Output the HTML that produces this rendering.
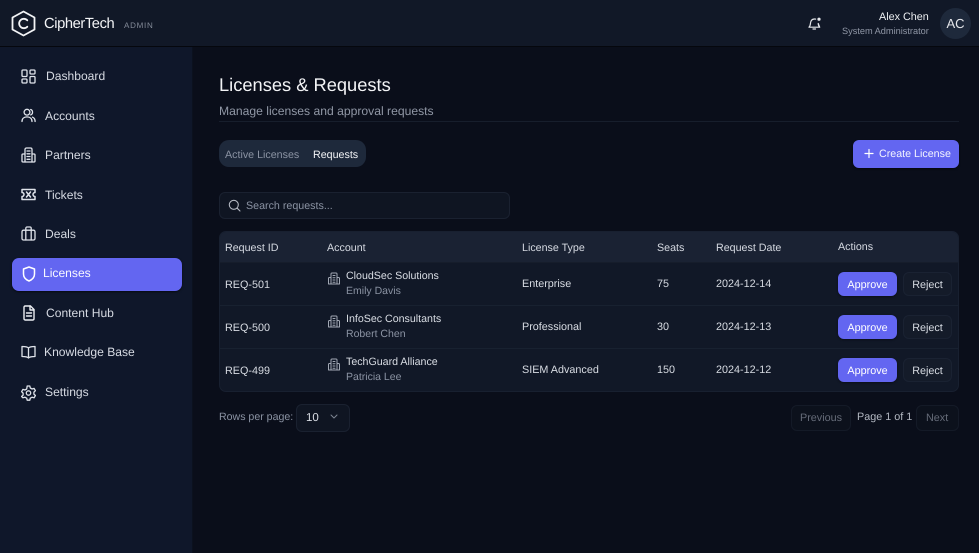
<!DOCTYPE html>
<html><head><meta charset="utf-8"><style>
*{box-sizing:border-box;margin:0;padding:0}
html{background:#0a0e1a}
html,body{width:979px;height:553px;overflow:hidden;font-family:"Liberation Sans",sans-serif;color:#e5e7eb;text-rendering:geometricPrecision}
body{background:#0a0e1a;filter:blur(.3px)}
.t{position:absolute;white-space:nowrap;line-height:14px;font-size:12px}
.a{position:absolute}
svg{position:absolute;fill:none;stroke:currentColor;stroke-width:1.6;stroke-linecap:round;stroke-linejoin:round}
.n{font-size:12.1px;color:#d6dae2;line-height:16px}
.btn{position:absolute;border-radius:6px;text-align:center;font-size:10.800px}
.ap{background:#6366f1;color:#fff;width:59px;height:24px;left:838px;line-height:26px;box-shadow:0 1px 2px #0006}
.rj{background:#141b29;border:1px solid #1a2232;color:#d8dce3;width:49px;height:24px;left:903px;line-height:24px}
.sub{color:#8b93a3;font-size:10.5px}
.cell{font-size:10.800px;color:#d8dce3}
.nm{font-size:10.650px;color:#d8dce3}
.th{font-size:10.700px;color:#d5d9e1}
.tab{font-size:10.700px}
</style></head><body>
<div class="a" style="left:0;top:0;width:979px;height:47px;background:#111827;border-bottom:1px solid #05070d"></div>
<div class="a" style="left:0;top:47px;width:193px;height:506px;background:#0f172a;border-right:1px solid #0b111e"></div>

<svg style="left:11px;top:10px;color:#f3f4f6;stroke-width:1.8" width="25" height="27" viewBox="0 0 25 27"><path d="M12.5 1.500 23.500 7.500V19.500L12.500 25.500 1.500 19.500V7.500Z"/><path d="M16.300 10.300a4.700 4.700 0 1 0 0 6.400" /></svg>
<div class="t" style="left:44px;top:15px;font-size:14.700px;line-height:18px;color:#f3f4f6;letter-spacing:-.4px">CipherTech</div>
<div class="t" style="left:124px;top:20px;font-size:8px;line-height:11px;color:#858c9a;letter-spacing:.75px">ADMIN</div>

<svg style="left:21px;top:69px;color:#dfe3ea;stroke-width:1.3" width="15" height="15" viewBox="0 0 15 15"><rect x="1" y="1" width="5" height="6.5" rx="1"/><rect x="9" y="1" width="5" height="4" rx="1"/><rect x="1" y="10" width="5" height="4" rx="1"/><rect x="9" y="7.5" width="5" height="6.5" rx="1"/></svg>
<div class="t n" style="left:46px;top:68px">Dashboard</div>
<svg style="left:21px;top:108px;color:#dfe3ea;stroke-width:1.3" width="15" height="15" viewBox="0 0 15 15"><circle cx="6" cy="4.2" r="2.9"/><path d="M1 13.5c0-3 2-4.6 5-4.600s5 1.600 5 4.600"/><path d="M9.700 1.500a2.900 2.900 0 0 1 0 5.400M11.500 9.200c1.600.6 2.600 2 2.600 4.300"/></svg>
<div class="t n" style="left:45px;top:108px">Accounts</div>
<svg style="left:21px;top:147px;color:#dfe3ea;stroke-width:1.3" width="15" height="16" viewBox="0 0 15 16"><path d="M4 15V2.500c0-.8.600-1.500 1.500-1.500h4c.9 0 1.500.7 1.500 1.500V15"/><path d="M4 7H2C1.300 7 1 7.500 1 8v6c0 .6.400 1 1 1h11c.6 0 1-.4 1-1V8c0-.5-.3-1-1-1h-2"/><path d="M6 4h3M6 6.800h3M6 9.500h3M6 12.300h3"/></svg>
<div class="t n" style="left:45px;top:147px">Partners</div>
<svg style="left:21px;top:188px;color:#dfe3ea;stroke-width:1.500" width="15" height="13" viewBox="0 0 15 13"><path d="M1 1.500h13v3a2 2 0 0 0 0 4v3H1v-3a2 2 0 0 0 0-4z"/><path d="M5.500 4l4 5M9.500 4l-4 5"/></svg>
<div class="t n" style="left:45px;top:187px">Tickets</div>
<svg style="left:21px;top:226px;color:#dfe3ea;stroke-width:1.3" width="15" height="15" viewBox="0 0 15 15"><rect x="1" y="4.200" width="13" height="9.800" rx="1.500"/><path d="M4.800 14V2.300c0-.7.500-1.300 1.200-1.300h3c.7 0 1.200.6 1.200 1.300V14"/></svg>
<div class="t n" style="left:45px;top:226px">Deals</div>

<div class="a" style="left:12px;top:258px;width:170px;height:33px;background:#6366f1;border-radius:7px;box-shadow:0 1px 2px #0009"></div>
<svg style="left:22px;top:266px;color:#fff;stroke-width:1.500" width="14" height="16" viewBox="0 0 14 16"><path d="M7 1 12.500 3V8c0 3.300-2.300 5.700-5.500 7-3.200-1.300-5.500-3.700-5.500-7V3z"/></svg>
<div class="t n" style="left:43px;top:265px;color:#f8f8ff">Licenses</div>

<svg style="left:23px;top:305px;color:#eceef2;stroke-width:1.400" width="12" height="16" viewBox="0 0 12 16"><path d="M1 2.200C1 1.500 1.500 1 2.200 1H7.500L11 4.500V13.800c0 .7-.5 1.200-1.200 1.200H2.200C1.500 15 1 14.500 1 13.800z"/><path d="M7 1v4h4M3.500 8h5M3.500 11h5"/></svg>
<div class="t n" style="left:46px;top:305px">Content Hub</div>
<svg style="left:21px;top:345px;color:#dfe3ea;stroke-width:1.300" width="15" height="14" viewBox="0 0 15 14"><path d="M7.500 3C6.500 1.800 5 1.500 1 1.500V11.500C5 11.500 6.500 11.800 7.500 13c1-1.200 2.500-1.500 6.500-1.500V1.500C10 1.500 8.500 1.800 7.500 3zM7.500 3v10"/></svg>
<div class="t n" style="left:44px;top:344px">Knowledge Base</div>
<svg style="left:21px;top:385px;color:#dfe3ea;stroke-width:1.300" width="15" height="16" viewBox="0 0 15 16"><circle cx="7.500" cy="8" r="2.200"/><path d="M6.200 1h2.600l.5 2 1.800 1 2-.6 1.300 2.300-1.500 1.400v2l1.500 1.400-1.300 2.300-2-.6-1.800 1-.5 2H6.200l-.5-2-1.800-1-2 .6L.6 11.500l1.500-1.400v-2L.6 6.700 1.900 4.400l2 .6 1.800-1z"/></svg>
<div class="t n" style="left:45px;top:384px">Settings</div>

<svg style="left:808px;top:17px;color:#e5e7eb;stroke-width:1.200" width="14" height="13" viewBox="0 0 14 13"><path d="M1 10.200c1-1 1.300-1.700 1.500-4 .2-2.500 1.500-4 3.700-4.200 .5 0 1 0 1.400.1M10.200 6.500c.1 1.800.5 2.800 1.500 3.700zM1 10.200h10.700M5 12h2.500"/><circle cx="11" cy="2.200" r="1.600" fill="#e5e7eb" stroke="none"/></svg>
<div class="t" style="left:879px;top:10px;font-size:10.800px;color:#eef0f3">Alex Chen</div>
<div class="t" style="left:842px;top:24px;font-size:9.200px;color:#8f96a5">System Administrator</div>
<div class="a" style="left:940px;top:8px;width:31px;height:31px;border-radius:50%;background:#1e293b;color:#e5e7eb;font-size:13px;line-height:32px;text-align:center">AC</div>

<div class="t" style="left:219px;top:73px;font-size:18.300px;line-height:23px;color:#f3f4f6">Licenses &amp; Requests</div>
<div class="t" style="left:219px;top:103px;font-size:12.150px;line-height:16px;color:#9097a5">Manage licenses and approval requests</div>
<div class="a" style="left:219px;top:121px;width:740px;height:1px;background:#171e2c"></div>

<div class="a" style="left:219px;top:140px;width:147px;height:27px;border-radius:10px;background:#1e293b"></div>
<div class="t tab" style="left:225px;top:148px;color:#8b93a3">Active Licenses</div>
<div class="t tab" style="left:313px;top:148px;color:#f1f2f5">Requests</div>

<div class="a" style="left:853px;top:140px;width:106px;height:28px;border-radius:6px;background:#6366f1;box-shadow:0 1px 2px #0008"></div>
<svg style="left:863px;top:147px;color:#fff;stroke-width:1.200" width="12" height="12" viewBox="0 0 12 12"><path d="M2 6.500h8M6 2.500v8"/></svg>
<div class="t tab" style="left:879px;top:147px;color:#f3f4ff">Create License</div>

<div class="a" style="left:219px;top:192px;width:291px;height:27px;border-radius:6px;background:#0f1522;border:1px solid #1a2130"></div>
<svg style="left:228px;top:199px;color:#b4b9c3;stroke-width:1.100" width="13" height="13" viewBox="0 0 13 13"><circle cx="5.800" cy="5.800" r="4.500"/><path d="M9.200 9.200 12 12"/></svg>
<div class="t tab" style="left:246px;top:199px;color:#8b93a3">Search requests...</div>

<div class="a" style="left:219px;top:231px;width:740px;height:161px;border-radius:7px;background:#111827;border:1px solid #182030;overflow:hidden">
<div class="a" style="left:0;top:0;width:740px;height:31px;background:#1a2233;border-bottom:1px solid #161d2b"></div>
<div class="a" style="left:0;top:73px;width:740px;height:1px;background:#182130"></div>
<div class="a" style="left:0;top:116px;width:740px;height:1px;background:#182130"></div>
</div>

<div class="t th" style="left:225px;top:241px">Request ID</div>
<div class="t th" style="left:327px;top:241px">Account</div>
<div class="t th" style="left:522px;top:241px">License Type</div>
<div class="t th" style="left:657px;top:241px">Seats</div>
<div class="t th" style="left:716px;top:241px">Request Date</div>
<div class="t th" style="left:838px;top:240px">Actions</div>

<svg style="left:328px;top:272px;color:#a2a8b4;stroke-width:1" width="12" height="13" viewBox="0 0 12 13"><path d="M3 12V2c0-.6.400-1 1-1h4c.6 0 1 .4 1 1v10"/><path d="M3 5.500H1.500C1 5.500.5 6 .5 6.500V12h11V6.500c0-.5-.5-1-1-1H9"/><path d="M5 3.500h2M5 5.700h2M5 8h2M5 10.200h2"/></svg>
<svg style="left:328px;top:315px;color:#a2a8b4;stroke-width:1" width="12" height="13" viewBox="0 0 12 13"><path d="M3 12V2c0-.6.400-1 1-1h4c.6 0 1 .4 1 1v10"/><path d="M3 5.500H1.500C1 5.500.5 6 .5 6.500V12h11V6.500c0-.5-.5-1-1-1H9"/><path d="M5 3.500h2M5 5.700h2M5 8h2M5 10.200h2"/></svg>
<svg style="left:328px;top:358px;color:#a2a8b4;stroke-width:1" width="12" height="13" viewBox="0 0 12 13"><path d="M3 12V2c0-.6.400-1 1-1h4c.6 0 1 .4 1 1v10"/><path d="M3 5.500H1.500C1 5.500.5 6 .5 6.500V12h11V6.500c0-.5-.5-1-1-1H9"/><path d="M5 3.500h2M5 5.700h2M5 8h2M5 10.200h2"/></svg>

<div class="t cell" style="left:225px;top:278px">REQ-501</div>
<div class="t nm" style="left:346px;top:269px">CloudSec Solutions</div>
<div class="t sub" style="left:346px;top:284px">Emily Davis</div>
<div class="t cell" style="left:522px;top:277px">Enterprise</div>
<div class="t cell" style="left:657px;top:277px">75</div>
<div class="t cell" style="left:716px;top:277px">2024-12-14</div>
<div class="btn ap" style="top:272px">Approve</div><div class="btn rj" style="top:272px">Reject</div>

<div class="t cell" style="left:225px;top:321px">REQ-500</div>
<div class="t nm" style="left:346px;top:312px">InfoSec Consultants</div>
<div class="t sub" style="left:346px;top:327px">Robert Chen</div>
<div class="t cell" style="left:522px;top:320px">Professional</div>
<div class="t cell" style="left:657px;top:320px">30</div>
<div class="t cell" style="left:716px;top:320px">2024-12-13</div>
<div class="btn ap" style="top:315px">Approve</div><div class="btn rj" style="top:315px">Reject</div>

<div class="t cell" style="left:225px;top:364px">REQ-499</div>
<div class="t nm" style="left:346px;top:355px">TechGuard Alliance</div>
<div class="t sub" style="left:346px;top:370px">Patricia Lee</div>
<div class="t cell" style="left:522px;top:363px">SIEM Advanced</div>
<div class="t cell" style="left:657px;top:363px">150</div>
<div class="t cell" style="left:716px;top:363px">2024-12-12</div>
<div class="btn ap" style="top:358px">Approve</div><div class="btn rj" style="top:358px">Reject</div>

<div class="t" style="left:219px;top:410px;font-size:10.600px;color:#8b93a3">Rows per page:</div>
<div class="a" style="left:296px;top:404px;width:54px;height:28px;border-radius:6px;background:#0f1522;border:1px solid #1a2130"></div>
<div class="t" style="left:306px;top:411px;font-size:11.500px;color:#d8dce3">10</div>
<svg style="left:329px;top:413px;color:#7d8492;stroke-width:1" width="10" height="8" viewBox="0 0 10 8"><path d="M2 2l3 3 3-3"/></svg>

<div class="a" style="left:791px;top:405px;width:60px;height:26px;border-radius:6px;background:#0c111c;border:1px solid #141a27"></div>
<div class="t" style="left:800px;top:411px;font-size:10.800px;color:#666c79">Previous</div>
<div class="t" style="left:857px;top:410px;font-size:10.800px;color:#b4b9c3">Page 1 of 1</div>
<div class="a" style="left:916px;top:405px;width:43px;height:26px;border-radius:6px;background:#0c111c;border:1px solid #141a27"></div>
<div class="t" style="left:926px;top:411px;font-size:10.800px;color:#666c79">Next</div>
</body></html>
